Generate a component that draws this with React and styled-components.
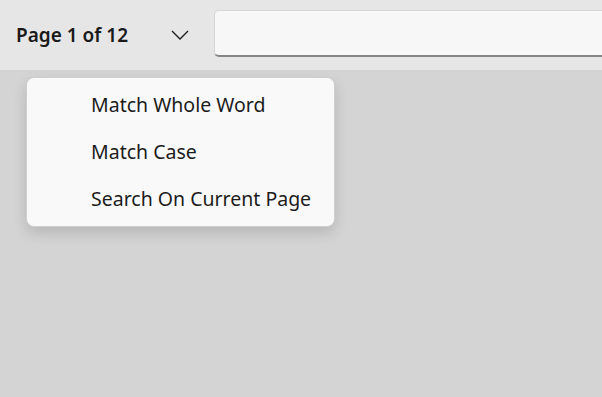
import React from "react";
import styled, { createGlobalStyle } from "styled-components";

const GlobalStyle = createGlobalStyle`
  html, body {
    margin: 0;
    padding: 0;
    background: #d4d4d4;
    font-family: "Noto Sans", "Open Sans", sans-serif;
  }
`;

const Page = styled.div`
  width: 602px;
  height: 397px;
  background: #d4d4d4;
  position: relative;
  overflow: hidden;
`;

const Toolbar = styled.div`
  height: 70px;
  background: #e6e6e6;
  display: flex;
  align-items: flex-start;
  box-sizing: border-box;
`;

const PageLabel = styled.div`
  width: 150px;
  padding: 0 0 0 16px;
  height: 70px;
  display: flex;
  align-items: center;
  font-size: 19px;
  font-weight: 600;
  color: #1a1a1a;
  box-sizing: border-box;
`;

const ChevronButton = styled.button`
  border: none;
  background: transparent;
  width: 48px;
  height: 70px;
  padding: 0;
  display: flex;
  align-items: center;
  justify-content: center;
  margin-left: 6px;
`;

const SearchBox = styled.input`
  margin-top: 10px;
  flex: 1;
  height: 47px;
  box-sizing: border-box;
  margin-left: 10px;
  margin-right: -10px;
  border: 1px solid #d6d6d6;
  border-bottom: 2px solid #868686;
  border-radius: 5px;
  background: #f7f7f7;
  outline: none;
`;

const Menu = styled.div`
  position: absolute;
  left: 26px;
  top: 77px;
  width: 309px;
  padding: 3px 0 4px;
  box-sizing: border-box;
  background: #f9f9f9;
  border: 1px solid #cfcfcf;
  border-radius: 8px;
  box-shadow: 0 6px 14px rgba(0, 0, 0, 0.14);
  display: flex;
  flex-direction: column;
`;

const MenuItem = styled.div`
  height: 47px;
  display: flex;
  align-items: center;
  padding-left: 64px;
  font-size: 19.5px;
  color: #1c1c1c;
`;

const Chevron = () => (
  <svg width="18" height="10" viewBox="0 0 18 10">
    <path d="M1 1 L9 9 L17 1" fill="none" stroke="#1a1a1a" strokeWidth="1.3" />
  </svg>
);

export default function App() {
  return (
    <Page>
      <GlobalStyle />
      <Toolbar>
        <PageLabel>Page 1 of 12</PageLabel>
        <ChevronButton>
          <Chevron />
        </ChevronButton>
        <SearchBox />
      </Toolbar>
      <Menu>
        <MenuItem>Match Whole Word</MenuItem>
        <MenuItem>Match Case</MenuItem>
        <MenuItem>Search On Current Page</MenuItem>
      </Menu>
    </Page>
  );
}
